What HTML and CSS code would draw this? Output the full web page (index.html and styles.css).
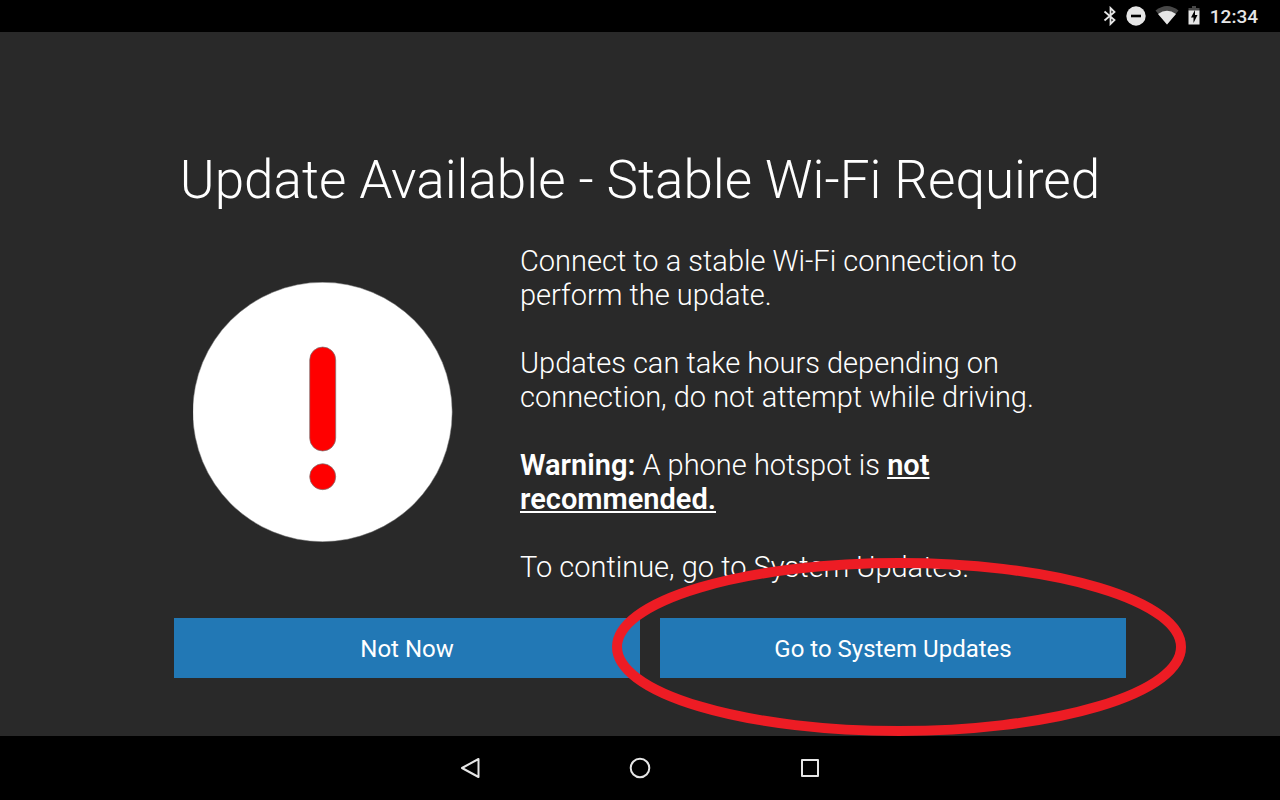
FILE: index.html
```html
<!DOCTYPE html>
<html lang="en">
<head>
<meta charset="utf-8">
<title>Update Available</title>
<link rel="stylesheet" href="styles.css">
</head>
<body>
<header class="status-bar">
  <div class="status-icons">
    <svg viewBox="0 0 14 20" width="14" height="20" aria-hidden="true"><path d="M1.500 5.500 11.500 14 7.500 18V2L11.500 6 1.500 14.500" fill="none" stroke="#e6e6e6" stroke-width="1.800"/></svg>
    <svg viewBox="0 0 20 20" width="20" height="20" aria-hidden="true"><circle cx="10" cy="10" r="9.700" fill="#e6e6e6"/><path d="M5 10h10" stroke="#000" stroke-width="2.600"/></svg>
    <svg viewBox="0 0 24 20" width="24" height="20" aria-hidden="true"><path d="M.500 4.500Q12-4.500 23.500 4.500L12 18.500Z" fill="#484848"/><path d="M3 8Q12 1.500 21 8L12 18.500Z" fill="#e6e6e6"/></svg>
    <svg viewBox="0 0 12 20" width="12" height="20" aria-hidden="true"><path d="M4 0h4v2h3.500v3H.500V2H4z" fill="#484848"/><path d="M.500 4.500h11v14H.500z" fill="#e6e6e6"/><path d="M7 4 3 11.500H5.500V17L9.500 9H7z" fill="#000"/></svg>
  </div>
  <time class="clock">12:34</time>
</header>
<main class="screen">
  <h1 class="title">Update Available - Stable Wi-Fi Required</h1>
  <section class="notice">
    <svg class="alert" viewBox="0 0 260 260" role="img" aria-label="Alert"><circle cx="129.500" cy="130" r="129.700" fill="#fff" stroke="#777" stroke-width=".5"/><g fill="#f00" stroke="#777" stroke-width=".7"><rect x="116.700" y="65" width="26" height="104" rx="13"/><circle cx="129.700" cy="194.700" r="13"/></g></svg>
    <div class="message">
      <p>Connect to a stable Wi-Fi connection to perform the update.</p>
      <p>Updates can take hours depending on connection, do not attempt while driving.</p>
      <p><strong>Warning:</strong> A phone hotspot is <strong class="underlined">not recommended.</strong></p>
      <p>To continue, go to System Updates.</p>
    </div>
  </section>
  <div class="actions">
    <button class="button" type="button">Not Now</button>
    <button class="button" type="button">Go to System Updates</button>
  </div>
  <svg class="highlight" viewBox="0 0 576 180" aria-hidden="true"><ellipse cx="288" cy="91" rx="282" ry="84" fill="none" stroke="#ed1c24" stroke-width="10"/></svg>
</main>
<nav class="nav-bar" aria-label="System navigation">
  <button class="nav-button" type="button" aria-label="Back"><svg viewBox="0 0 24 24" width="24" height="24"><path d="M20.500 3v18L4 12z" fill="none" stroke="#e6e6e6" stroke-width="2" stroke-linejoin="round"/></svg></button>
  <button class="nav-button" type="button" aria-label="Home"><svg viewBox="0 0 24 24" width="24" height="24"><circle cx="12" cy="12" r="9.300" fill="none" stroke="#e6e6e6" stroke-width="2"/></svg></button>
  <button class="nav-button" type="button" aria-label="Recent apps"><svg viewBox="0 0 24 24" width="24" height="24"><rect x="4" y="4" width="16" height="16" fill="none" stroke="#e6e6e6" stroke-width="2" stroke-linejoin="round"/></svg></button>
</nav>
</body>
</html>
```
FILE: styles.css
```css
* { box-sizing: border-box; }
body {
  display: flex;
  flex-direction: column;
  min-height: 100vh;
  margin: 0;
  background: #000;
  color: #fff;
  font-family: Roboto, "Liberation Sans", sans-serif;
}
.status-bar {
  display: flex;
  align-items: center;
  justify-content: flex-end;
  gap: 10px;
  height: 32px;
  padding-right: 22px;
}
.status-icons {
  display: flex;
  gap: 9px;
}
.clock {
  color: #e6e6e6;
  font-size: 19px;
  font-weight: 500;
}
.screen {
  position: relative;
  flex: 1;
  padding: 116px 0 58px;
  background: #292929;
}
.title {
  margin: 0;
  font-size: 53px;
  font-weight: 300;
  line-height: 64px;
  text-align: center;
}
.notice {
  display: flex;
  align-items: flex-start;
  gap: 67px;
  padding: 32px 214px 34px 193px;
}
.alert {
  flex: none;
  width: 260px;
  height: 260px;
  margin-top: 38px;
}
.message {
  flex: 1;
  font-size: 29px;
  font-weight: 300;
  line-height: 34px;
}
.message p { margin: 0 0 34px; }
.message p:last-child { margin: 0; }
.message strong { font-weight: 600; }
.underlined { text-decoration: underline; }
.actions {
  display: flex;
  gap: 20px;
  padding: 0 154px 0 174px;
}
.button {
  flex: 1;
  height: 60px;
  padding: 2px 0 0;
  border: 0;
  background: #2278b5;
  color: #fff;
  font-family: inherit;
  font-size: 24px;
}
.highlight {
  position: absolute;
  right: 93px;
  bottom: 0;
  width: 576px;
  pointer-events: none;
}
.nav-bar {
  display: flex;
  align-items: center;
  justify-content: center;
  gap: 122px;
  height: 64px;
}
.nav-button {
  display: flex;
  align-items: center;
  justify-content: center;
  width: 48px;
  height: 48px;
  padding: 0;
  border: 0;
  background: none;
}
```
